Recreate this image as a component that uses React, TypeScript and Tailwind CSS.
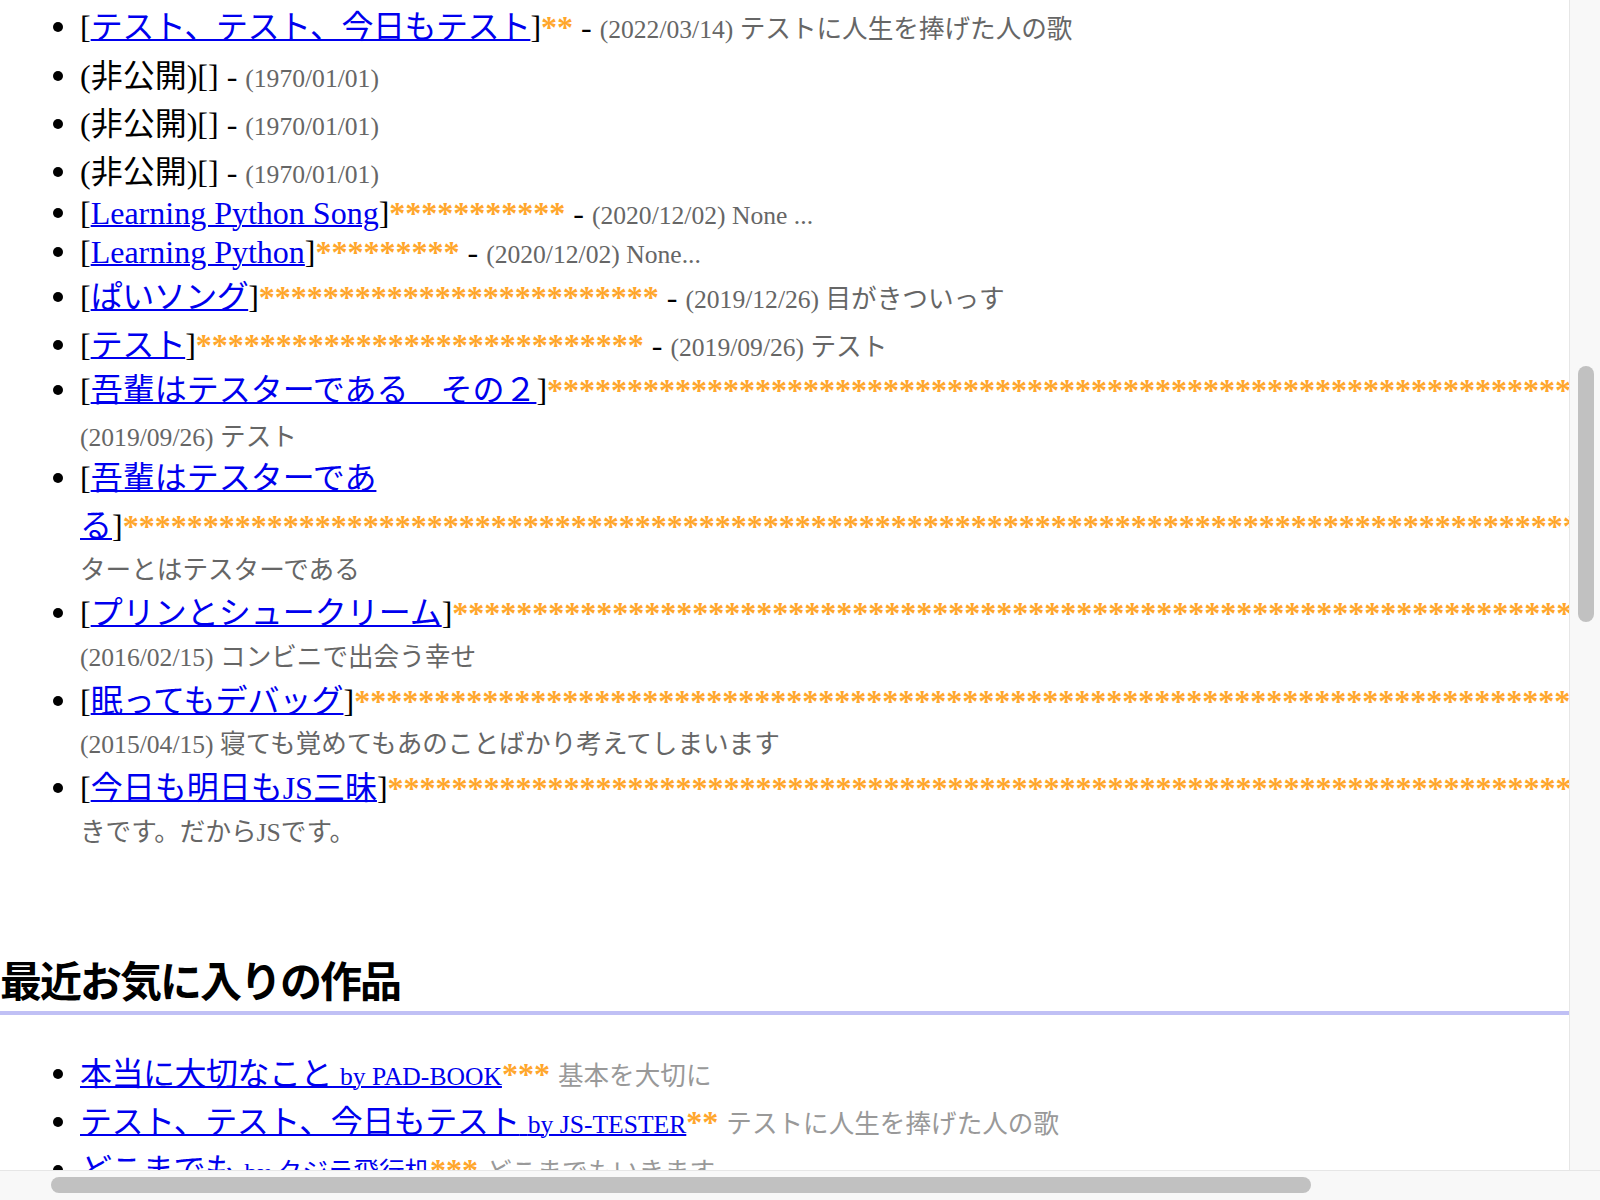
import React from 'react';

function Stars({ n }: { n: number }) {
  return <span className="font-bold text-[#ffa62b]">{'*'.repeat(n)}</span>;
}

function Row({
  bullet = false,
  className = '',
  children,
}: {
  bullet?: boolean;
  className?: string;
  children: React.ReactNode;
}) {
  return (
    <div className={`flex h-[38px] items-center whitespace-nowrap ${className}`}>
      <div className="flex w-[80px] shrink-0 justify-end pr-[17px]">
        {bullet && <span className="block size-[10px] rounded-full bg-black" />}
      </div>
      <div className="leading-none">{children}</div>
    </div>
  );
}

function Link({ children, jp = false }: { children: React.ReactNode; jp?: boolean }) {
  return (
    <a href="#" className={`text-[#0000ee] underline decoration-2 ${jp ? 'tracking-[-0.5px]' : ''}`}>
      {children}
    </a>
  );
}

function Note({ children }: { children: React.ReactNode }) {
  return <span className="text-[25.6px] text-[#666]">{children}</span>;
}

function Desc({ children }: { children: React.ReactNode }) {
  return <span className="text-[25.6px] text-[#999]">{children}</span>;
}

export default function App() {
  return (
    <div className="flex h-[1200px] w-[1600px] flex-col overflow-hidden bg-white font-['Liberation_Serif','Noto_Sans_CJK_JP',serif] text-[32px] text-black">
      <div className="flex min-h-0 flex-1">
        <div className="min-w-0 flex-1 overflow-hidden pt-[8px]">
          {/* recent works */}
          <Row bullet>
            [<Link jp>テスト、テスト、今日もテスト</Link>]<Stars n={2} /> - <Note>(2022/03/14) テストに人生を捧げた人の歌</Note>
          </Row>
          <Row bullet className="mt-[11px]">
            (非公開)[] - <Note>(1970/01/01)</Note>
          </Row>
          <Row bullet className="mt-[10px]">
            (非公開)[] - <Note>(1970/01/01)</Note>
          </Row>
          <Row bullet className="mt-[10px]">
            (非公開)[] - <Note>(1970/01/01)</Note>
          </Row>
          <Row bullet className="mt-[3px]">
            [<Link>Learning Python Song</Link>]<Stars n={11} /> - <Note>(2020/12/02) None ...</Note>
          </Row>
          <Row bullet className="mt-[1px]">
            [<Link>Learning Python</Link>]<Stars n={9} /> - <Note>(2020/12/02) None...</Note>
          </Row>
          <Row bullet className="mt-[7px]">
            [<Link jp>ぱいソング</Link>]<Stars n={25} /> - <Note>(2019/12/26) 目がきついっす</Note>
          </Row>
          <Row bullet className="mt-[10px]">
            [<Link jp>テスト</Link>]<Stars n={28} /> - <Note>(2019/09/26) テスト</Note>
          </Row>
          <Row bullet className="mt-[7px]">
            [<Link>吾輩はテスターである　その２</Link>]<Stars n={80} />
          </Row>
          <Row className="mt-[7px]">
            <Note>(2019/09/26) テスト</Note>
          </Row>
          <Row bullet className="mt-[5px]">
            [<Link>吾輩はテスターであ</Link>
          </Row>
          <Row className="mt-[10px]">
            <Link>る</Link>]<Stars n={100} />
          </Row>
          <Row className="mt-[4px]">
            <Note>ターとはテスターである</Note>
          </Row>
          <Row bullet className="mt-[7px]">
            [<Link>プリンとシュークリーム</Link>]<Stars n={80} />
          </Row>
          <Row className="mt-[4px]">
            <Note>(2016/02/15) コンビニで出会う幸せ</Note>
          </Row>
          <Row bullet className="mt-[8px]">
            [<Link>眠ってもデバッグ</Link>]<Stars n={80} />
          </Row>
          <Row className="mt-[3px]">
            <Note>(2015/04/15) 寝ても覚めてもあのことばかり考えてしまいます</Note>
          </Row>
          <Row bullet className="mt-[8px]">
            [<Link>今日も明日もJS三昧</Link>]<Stars n={80} />
          </Row>
          <Row className="mt-[4px]">
            <Note>きです。だからJSです。</Note>
          </Row>

          <h2 className="mt-[106px] flex h-[60px] items-center border-b-4 border-[#c0c0f5] text-[42px] font-bold tracking-[-2px] whitespace-nowrap">
            最近お気に入りの作品
          </h2>

          <Row bullet className="mt-[40px]">
            <Link>
              <span className="tracking-[-0.5px]">本当に大切なこと</span> <span className="text-[25.6px]">by PAD-BOOK</span>
            </Link>
            <Stars n={3} /> <Desc>基本を大切に</Desc>
          </Row>
          <Row bullet className="mt-[10px]">
            <Link>
              <span className="tracking-[-0.5px]">テスト、テスト、今日もテスト</span> <span className="text-[25.6px]">by JS-TESTER</span>
            </Link>
            <Stars n={2} /> <Desc>テストに人生を捧げた人の歌</Desc>
          </Row>
          <Row bullet className="mt-[10px]">
            <Link>
              <span className="tracking-[-0.5px]">どこまでも</span> <span className="text-[25.6px]">by クジラ飛行机</span>
            </Link>
            <Stars n={3} /> <Desc>どこまでもいきます</Desc>
          </Row>
        </div>

        {/* vertical scrollbar */}
        <div className="w-[31px] shrink-0 border-l border-[#e6e6e6] bg-[#f8f8f8] pt-[366px]">
          <div className="ml-[8px] h-[256px] w-[16px] rounded-full bg-[#c1c1c1]" />
        </div>
      </div>

      {/* horizontal scrollbar */}
      <div className="h-[30px] shrink-0 border-t border-[#e6e6e6] bg-[#f8f8f8] pt-[6px] pl-[51px]">
        <div className="h-[16px] w-[1260px] rounded-full bg-[#c1c1c1]" />
      </div>
    </div>
  );
}
